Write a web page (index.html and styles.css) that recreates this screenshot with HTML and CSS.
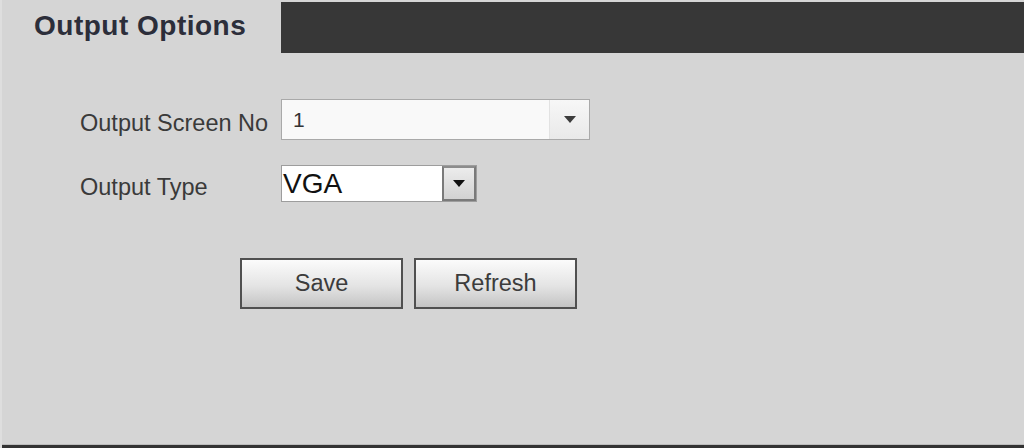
FILE: index.html
```html
<!DOCTYPE html>
<html lang="en">
<head>
  <meta charset="UTF-8">
  <meta name="viewport" content="width=device-width, initial-scale=1.0">
  <title>Output Options</title>
  <link rel="stylesheet" href="styles.css">
</head>
<body>
  <div class="panel">
    <div class="tabbar">
      <div class="tab">Output Options</div>
      <div class="tabfill"></div>
    </div>

    <div class="form">
      <div class="row">
        <span class="label">Output Screen No</span>
        <div class="combo combo-wide">
          <span class="value">1</span>
          <span class="arrow">
            <svg width="12" height="7" viewBox="0 0 12 7"><path d="M0 0H12L6 7Z" fill="#3c3c3c"/></svg>
          </span>
        </div>
      </div>

      <div class="row row-type">
        <span class="label">Output Type</span>
        <div class="combo combo-small">
          <span class="value">VGA</span>
          <span class="arrow">
            <svg width="12" height="7" viewBox="0 0 12 7"><path d="M0 0H12L6 7Z" fill="#111"/></svg>
          </span>
        </div>
      </div>

      <div class="actions">
        <button class="btn">Save</button>
        <button class="btn">Refresh</button>
      </div>
    </div>

    <div class="bottomline"></div>
  </div>
</body>
</html>
```

FILE: styles.css
```css
html, body {
  margin: 0;
  padding: 0;
}

body {
  width: 1024px;
  height: 448px;
  overflow: hidden;
  background-color: #d5d5d5;
  font-family: "Liberation Sans", Arial, sans-serif;
}

.panel {
  display: flex;
  flex-direction: column;
  height: 448px;
  border-left: 2px solid #dedede;
  box-sizing: border-box;
}

.tabbar {
  display: flex;
  height: 53px;
}

.tab {
  width: 247px;
  padding: 10px 0 0 32px;
  font-size: 28px;
  line-height: 32px;
  font-weight: bold;
  letter-spacing: 0.5px;
  color: #2c2e3a;
}

.tabfill {
  flex: 1;
  margin-top: 2px;
  background-color: #373737;
}

.form {
  flex: 1;
  padding: 46px 0 0 78px;
}

.row {
  display: flex;
  align-items: center;
}

.row-type {
  margin-top: 25px;
}

.label {
  width: 201px;
  padding-top: 8px;
  font-size: 23.5px;
  line-height: 27px;
  color: #3a3a3a;
}

.combo {
  display: flex;
  align-items: center;
  box-sizing: border-box;
  border: 1px solid #a9a9a9;
}

.combo-wide {
  width: 309px;
  height: 41px;
  background-color: #f9f9f9;
}

.combo-wide .value {
  flex: 1;
  padding-left: 11px;
  font-size: 21px;
  color: #333;
}

.combo-wide .arrow {
  display: flex;
  align-items: center;
  justify-content: center;
  width: 39px;
  height: 100%;
  border-left: 1px solid #e2e2e2;
  background: linear-gradient(#f7f7f7, #e9e9e9);
}

.combo-small {
  width: 196px;
  height: 37px;
  background-color: #fff;
  border-color: #9d9d9d;
}

.combo-small .value {
  flex: 1;
  padding-left: 1px;
  font-size: 28px;
  color: #111;
}

.combo-small .arrow {
  display: flex;
  align-items: center;
  justify-content: center;
  box-sizing: border-box;
  width: 34px;
  height: 35px;
  border: 2px solid #7a7a7a;
  border-top-color: #8c8c8c;
  background: linear-gradient(#ececec, #d2d2d2);
}

.actions {
  display: flex;
  gap: 11px;
  margin: 56px 0 0 160px;
}

.btn {
  width: 163px;
  height: 51px;
  border: 2px solid #505050;
  background: linear-gradient(#fbfbfb, #e4e4e4 55%, #c4c4c4);
  font-family: "Liberation Sans", Arial, sans-serif;
  font-size: 23.5px;
  color: #3c3c3c;
  padding: 0;
}

.bottomline {
  height: 3px;
  border-top: 1px solid #bcbcbc;
  background-color: #333;
}
```
